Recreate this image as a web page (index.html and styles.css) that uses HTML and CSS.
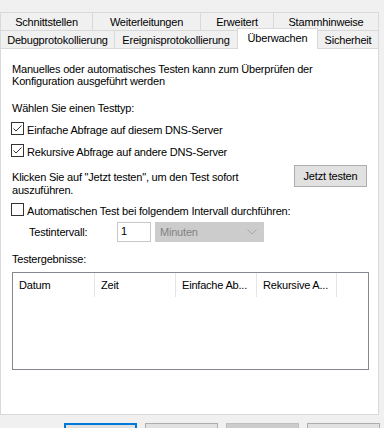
FILE: index.html
```html
<!DOCTYPE html>
<html lang="de">
<head>
    <meta charset="UTF-8">
    <meta name="viewport" content="width=device-width, initial-scale=1.0">
    <title>Überwachen</title>
    <link rel="stylesheet" href="styles.css">
</head>
<body>
    <div class="tabs">
        <div class="tab-row">
            <div class="tab tab-schnitt">Schnittstellen</div>
            <div class="tab tab-weiter">Weiterleitungen</div>
            <div class="tab tab-erweitert">Erweitert</div>
            <div class="tab tab-stamm">Stammhinweise</div>
        </div>
        <div class="tab-row">
            <div class="tab tab-debug">Debugprotokollierung</div>
            <div class="tab tab-ereignis">Ereignisprotokollierung</div>
            <div class="tab tab-ueber selected">Überwachen</div>
            <div class="tab tab-sicher">Sicherheit</div>
        </div>
    </div>

    <div class="panel">
        <p class="intro">Manuelles oder automatisches Testen kann zum Überprüfen der<br>Konfiguration ausgeführt werden</p>
        <p class="label type-label">Wählen Sie einen Testtyp:</p>

        <div class="check check-first">
            <svg class="box" width="13" height="13" viewBox="0 0 13 13">
                <rect x="0.5" y="0.5" width="12" height="12" fill="#fff" stroke="#333"/>
                <path d="M2.5 6.5 L5 9 L10.5 3.5" fill="none" stroke="#333" stroke-width="1"/>
            </svg>
            <span class="check-text">Einfache Abfrage auf diesem DNS-Server</span>
        </div>
        <div class="check check-second">
            <svg class="box" width="13" height="13" viewBox="0 0 13 13">
                <rect x="0.5" y="0.5" width="12" height="12" fill="#fff" stroke="#333"/>
                <path d="M2.5 6.5 L5 9 L10.5 3.5" fill="none" stroke="#333" stroke-width="1"/>
            </svg>
            <span class="check-text">Rekursive Abfrage auf andere DNS-Server</span>
        </div>

        <div class="now-row">
            <p class="now-text">Klicken Sie auf "Jetzt testen", um den Test sofort<br>auszuführen.</p>
            <button class="btn now-btn">Jetzt testen</button>
        </div>

        <div class="check check-auto">
            <svg class="box" width="13" height="13" viewBox="0 0 13 13">
                <rect x="0.5" y="0.5" width="12" height="12" fill="#fff" stroke="#333"/>
            </svg>
            <span class="check-text">Automatischen Test bei folgendem Intervall durchführen:</span>
        </div>

        <div class="interval">
            <span class="interval-label">Testintervall:</span>
            <div class="num-box">1</div>
            <div class="unit-select">
                <span>Minuten</span>
                <svg width="10" height="6" viewBox="0 0 10 6">
                    <path d="M0.5 0.5 L5 5 L9.5 0.5" fill="none" stroke="#a8a8a8" stroke-width="1"/>
                </svg>
            </div>
        </div>

        <p class="label results-label">Testergebnisse:</p>
        <div class="results">
            <div class="results-head">
                <div class="col col-date">Datum</div>
                <div class="col col-time">Zeit</div>
                <div class="col col-simple">Einfache Ab...</div>
                <div class="col col-rec">Rekursive A...</div>
            </div>
        </div>
    </div>

    <div class="buttons">
        <button class="btn dlg default"></button>
        <button class="btn dlg"></button>
        <button class="btn dlg disabled"></button>
        <button class="btn dlg"></button>
    </div>
</body>
</html>
```

FILE: styles.css
```css
body {
    margin: 0;
    background-color: #f0f0f0;
    font-family: "Liberation Sans", Arial, sans-serif;
    font-size: 11px;
    letter-spacing: -0.2px;
    color: #000;
}

p {
    margin: 0;
}

.tabs {
    padding-top: 12px;
    width: 379px;
}

.tab-row {
    display: flex;
    height: 18px;
}

.tab {
    box-sizing: border-box;
    height: 18px;
    border: 1px solid #d9d9d9;
    border-bottom: none;
    margin-left: -1px;
    padding-top: 2px;
    line-height: 15px;
    text-align: center;
    white-space: nowrap;
    background-color: #f0f0f0;
}

.tab:first-child {
    margin-left: 0;
}

.tab-schnitt { width: 93px; }
.tab-weiter { width: 109px; }
.tab-erweitert { width: 74px; }
.tab-stamm { width: 106px; }
.tab-debug { width: 115px; }
.tab-ereignis { width: 124px; }
.tab-ueber { width: 81px; }
.tab-sicher { width: 62px; }

.tab.selected {
    height: 21px;
    margin-top: -2px;
    margin-bottom: -1px;
    background-color: #fff;
    z-index: 1;
}

.panel {
    box-sizing: border-box;
    width: 379px;
    height: 367px;
    background-color: #fff;
    border: 1px solid #d9d9d9;
    padding-left: 10px;
}

.intro {
    margin-top: 14px;
    margin-left: 1px;
    line-height: 12px;
}

.label {
    line-height: 13px;
    margin-left: 1px;
}

.type-label {
    margin-top: 15px;
}

.check {
    display: flex;
    align-items: flex-start;
    height: 13px;
}

.box {
    flex-shrink: 0;
}

.check-text {
    margin-left: 3px;
    margin-top: 2px;
    line-height: 13px;
    white-space: nowrap;
}

.check-first {
    margin-top: 7px;
}

.check-second {
    margin-top: 9px;
}

.now-row {
    display: flex;
    align-items: flex-start;
    justify-content: space-between;
    margin-top: 8px;
    padding-right: 11px;
}

.now-text {
    margin-top: 6px;
    margin-left: 1px;
    line-height: 13px;
}

.btn {
    box-sizing: border-box;
    width: 73px;
    height: 22px;
    padding: 0;
    font-family: inherit;
    font-size: 11px;
    letter-spacing: -0.2px;
    color: #000;
    background-color: #e1e1e1;
    border: 1px solid #adadad;
}

.check-auto {
    margin-top: 6px;
}

.interval {
    display: flex;
    align-items: center;
    height: 20px;
    margin-top: 6px;
}

.interval-label {
    width: 88px;
    margin-left: 18px;
}

.num-box {
    box-sizing: border-box;
    width: 34px;
    height: 20px;
    border: 1px solid #c8c8c8;
    padding-left: 3px;
    line-height: 17px;
}

.unit-select {
    box-sizing: border-box;
    display: flex;
    align-items: center;
    justify-content: space-between;
    width: 109px;
    height: 20px;
    margin-left: 4px;
    padding: 0 6px 0 4px;
    background-color: #cccccc;
    border: 1px solid #cccccc;
    color: #838383;
}

.results-label {
    margin-top: 11px;
}

.results {
    box-sizing: border-box;
    width: 357px;
    height: 98px;
    margin-top: 6px;
    margin-left: 1px;
    border: 1px solid #828790;
    background-color: #fff;
}

.results-head {
    display: flex;
    height: 24px;
}

.col {
    box-sizing: border-box;
    height: 24px;
    border-right: 1px solid #e5e5e5;
    padding-left: 6px;
    line-height: 24px;
    white-space: nowrap;
    overflow: hidden;
}

.col-date { width: 82px; }
.col-time { width: 81px; }
.col-simple { width: 81px; }
.col-rec { width: 80px; }

.buttons {
    display: flex;
    gap: 8px;
    margin-top: 8px;
    margin-left: 64px;
}

.dlg {
    height: 23px;
}

.dlg.default {
    border-color: #0078d7;
    box-shadow: inset 0 0 0 1px #0078d7;
}

.dlg.disabled {
    background-color: #cccccc;
    border-color: #bfbfbf;
}
```
